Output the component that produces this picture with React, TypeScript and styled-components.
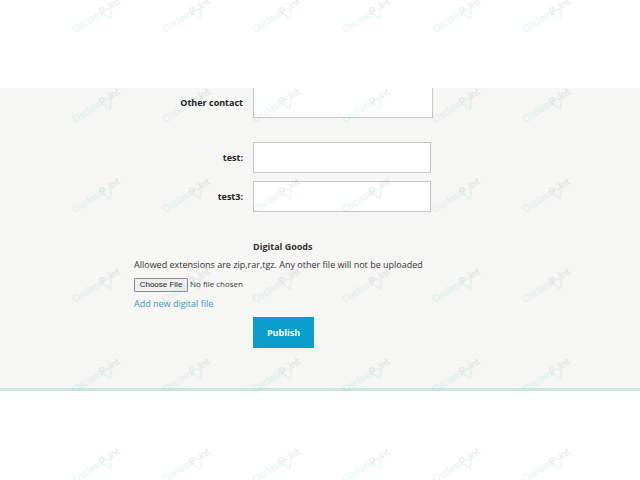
import React from "react";
import styled, { createGlobalStyle } from "styled-components";

const GlobalStyle = createGlobalStyle`
  * { box-sizing: border-box; }
  body {
    margin: 0;
    background: #fff;
    color: #333;
    font-family: "Open Sans", "Noto Sans", sans-serif;
    font-size: 9px;
    line-height: 14px;
  }
`;

const Page = styled.div`
  position: relative;
  min-height: 100vh;
  padding-top: 88px;
  overflow: hidden;
`;

const Panel = styled.main`
  background: #f6f6f4;
  border-bottom: 3px solid #c8e6e6;
  padding: 0 16px 40px;
`;

const Form = styled.form`
  max-width: 372px;
  margin: 0 auto;
`;

const Row = styled.div<{ $gap: number }>`
  display: grid;
  grid-template-columns: 109px 1fr;
  column-gap: 10px;
  align-items: center;
  margin-bottom: ${(p) => p.$gap}px;
`;

const Label = styled.label`
  color: #222;
  font-weight: 700;
  text-align: right;
`;

const Input = styled.input`
  width: 178px;
  height: 31px;
  padding: 4px 8px;
  border: 1px solid #c4c6c6;
  border-radius: 0;
  background: #fff;
  font: inherit;
`;

const TextArea = styled.textarea`
  display: block;
  width: 180px;
  height: 30px;
  padding: 4px 8px;
  border: 1px solid #c4c6c6;
  border-top: 0;
  border-radius: 0;
  background: #fff;
  font: inherit;
  resize: none;
`;

const Heading = styled.h2`
  margin: 0 0 4px 119px;
  color: #333;
  font-size: 9px;
  line-height: 14px;
`;

const Note = styled.p`
  margin: 0 0 5px;
`;

const FileInput = styled.input`
  display: block;
  width: 100%;
  height: 16px;
  margin-bottom: 4px;
  font-family: "Open Sans", "Noto Sans", sans-serif;
  font-size: 8px;
  line-height: 14px;

  &::file-selector-button {
    width: 54px;
    height: 14px;
    margin: 0 2px 0 0;
    padding: 0;
    border: 1px solid #8c8c8c;
    border-radius: 1px;
    background: #efefef;
    color: #222;
    font-family: "Liberation Sans", sans-serif;
    font-size: 8px;
    line-height: 12px;
  }
`;

const Link = styled.a`
  display: table;
  color: #4098b4;
  text-decoration: none;
`;

const Publish = styled.button`
  display: block;
  height: 31px;
  min-width: 61px;
  margin: 6px 0 0 119px;
  padding: 0 12px;
  border: 0;
  background: #0c9dcd;
  color: #fff;
  font: inherit;
  font-weight: 700;
`;

const Overlay = styled.div`
  position: absolute;
  top: -8px;
  left: 64px;
  display: grid;
  grid-template-columns: repeat(6, 90px);
  grid-auto-rows: 90px;
  pointer-events: none;
`;

const Mark = () => (
  <svg width="64" height="48" viewBox="0 0 64 48" aria-hidden="true">
    <g
      transform="translate(11 41) rotate(-33)"
      fontFamily="Lato, sans-serif"
      fontSize="10"
      opacity="0.11"
      strokeWidth="0.4"
    >
      <text x="0" y="0" fill="#4ac3ad" stroke="#4ac3ad">Osclass</text>
      <text x="32" y="0" fill="#555" stroke="#555">P</text>
      <text x="43" y="0" fill="#555" stroke="#555">int</text>
    </g>
    <path
      d="M46 27 L39.8 22 a3.9 3.9 0 1 1 7.4 -2.5 Z"
      fill="none"
      stroke="#4ac3ad"
      strokeWidth="1.4"
      strokeLinejoin="round"
      opacity="0.13"
    />
  </svg>
);

export default function App() {
  return (
    <>
      <GlobalStyle />
      <Page>
        <Panel>
          <Form onSubmit={(e) => e.preventDefault()}>
            <Row $gap={24}>
              <Label htmlFor="contact">Other contact</Label>
              <TextArea id="contact" />
            </Row>
            <Row $gap={8}>
              <Label htmlFor="test">test:</Label>
              <Input id="test" type="text" />
            </Row>
            <Row $gap={28}>
              <Label htmlFor="test3">test3:</Label>
              <Input id="test3" type="text" />
            </Row>
            <Heading>Digital Goods</Heading>
            <Note>Allowed extensions are zip,rar,tgz. Any other file will not be uploaded</Note>
            <FileInput type="file" aria-label="Digital file" />
            <Link href="#add">Add new digital file</Link>
            <Publish type="submit">Publish</Publish>
          </Form>
        </Panel>
        <Overlay>
          {Array.from({ length: 36 }, (_, i) => (
            <Mark key={i} />
          ))}
        </Overlay>
      </Page>
    </>
  );
}
